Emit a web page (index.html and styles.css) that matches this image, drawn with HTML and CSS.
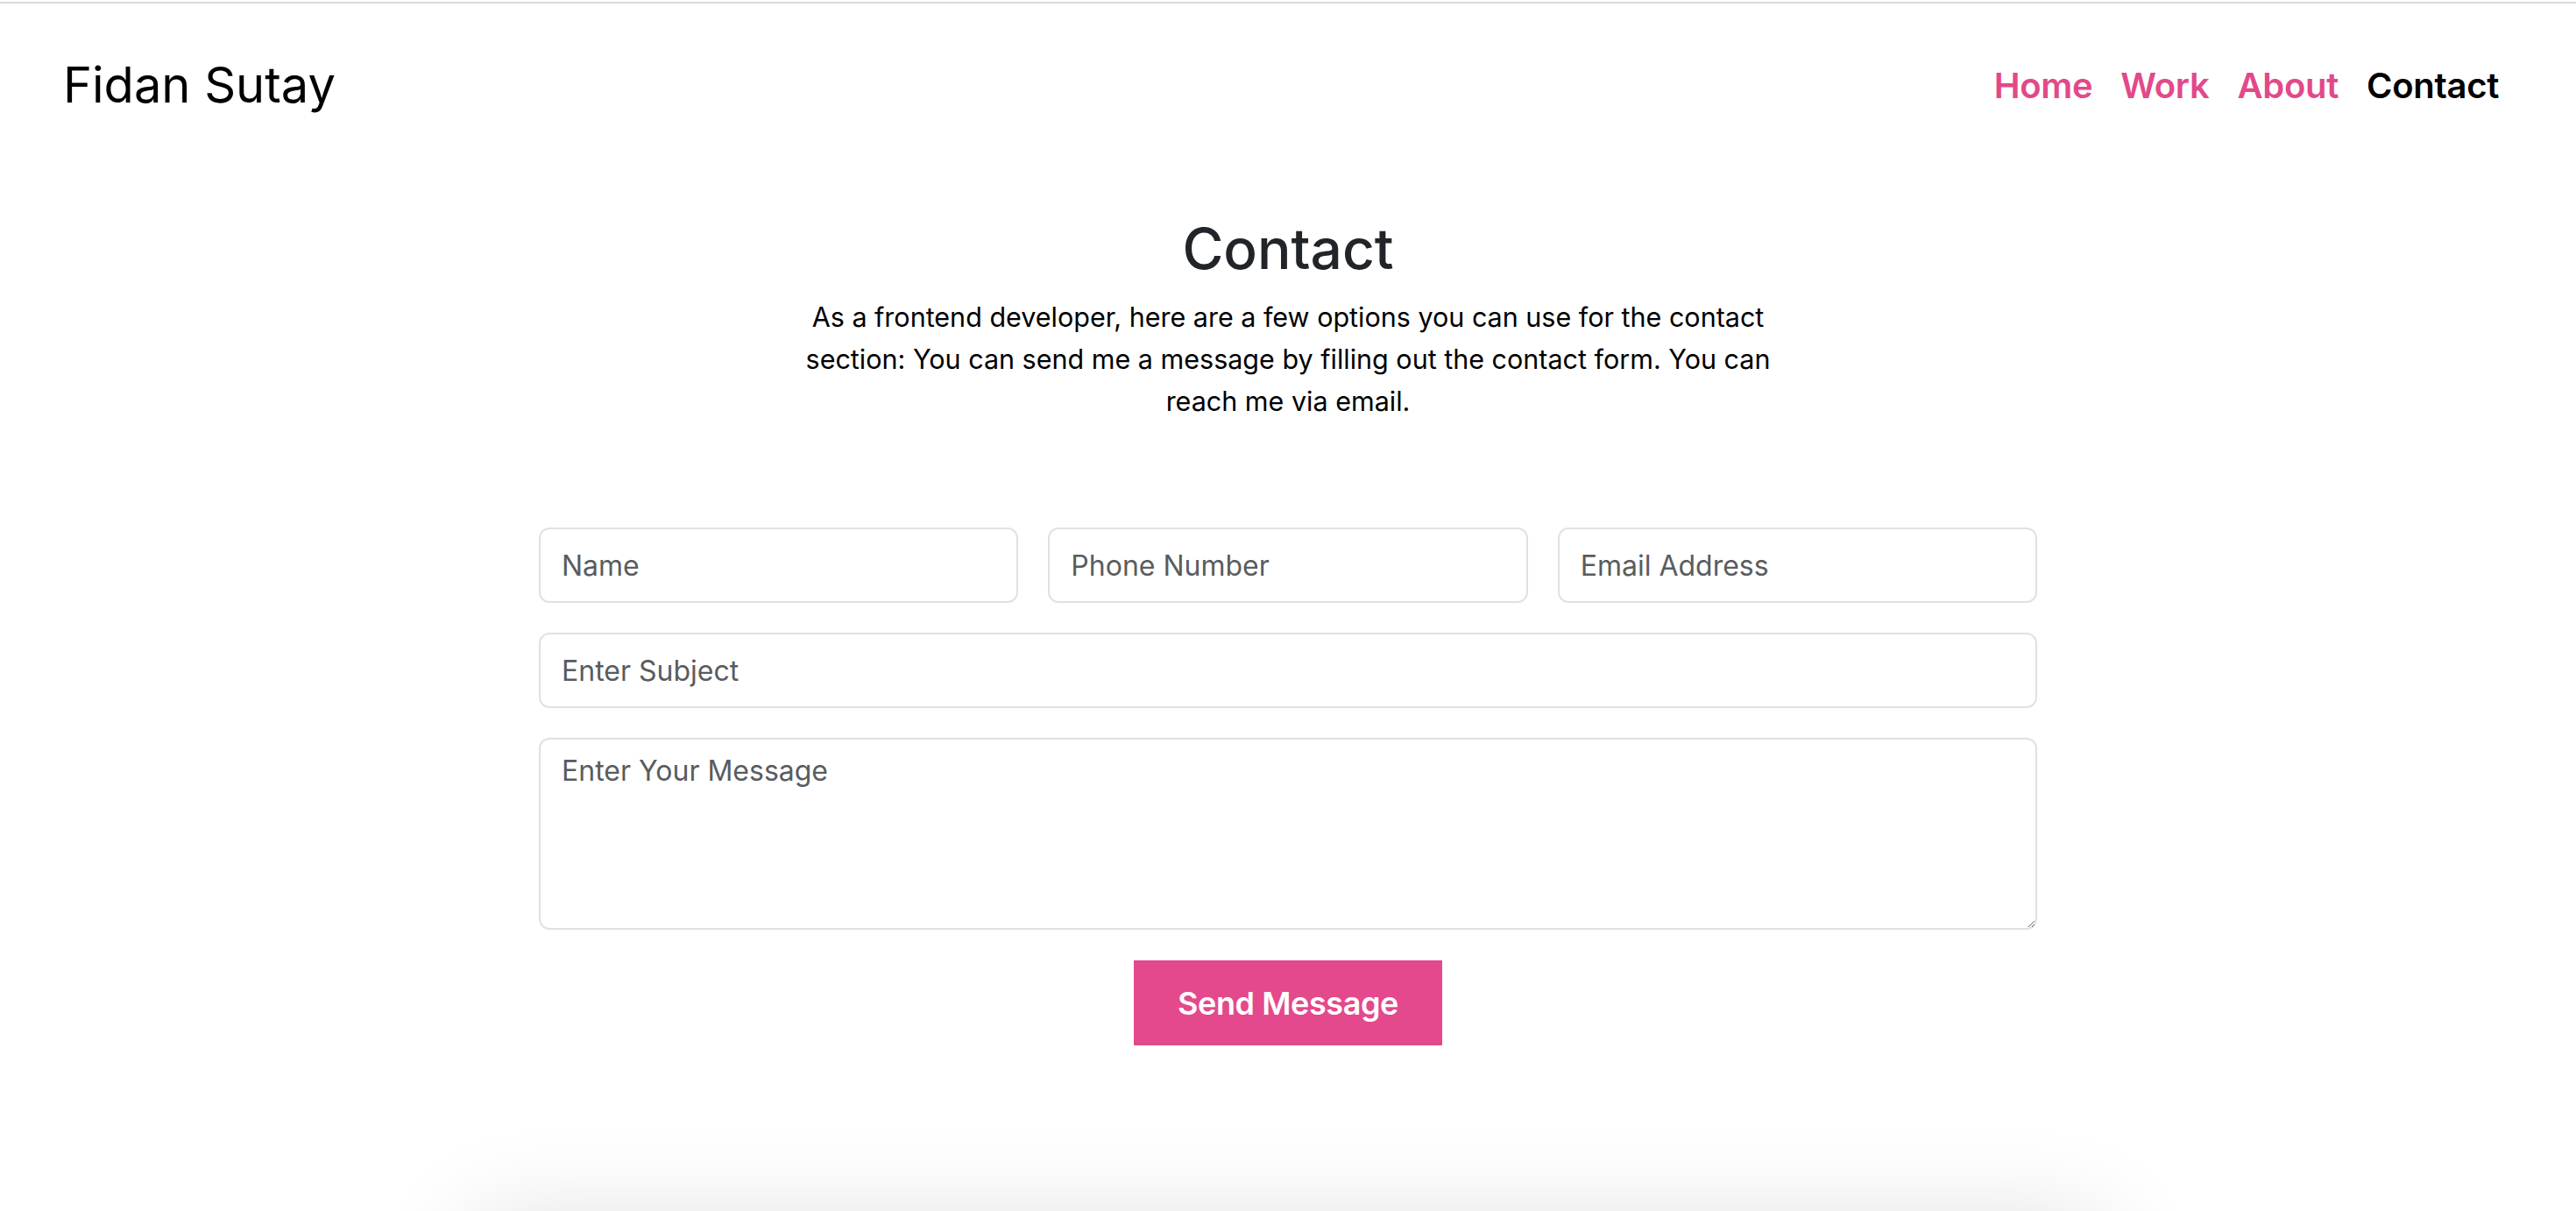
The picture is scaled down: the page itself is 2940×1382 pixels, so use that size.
FILE: index.html
```html
<!DOCTYPE html>
<html lang="en">
<head>
<meta charset="utf-8">
<title>Fidan Sutay - Contact</title>
<link rel="stylesheet" href="styles.css">
</head>
<body>
<div class="topline"></div>
<header class="site-header">
  <a class="brand" href="#">Fidan Sutay</a>
  <nav class="nav">
    <a class="nav-link" href="#">Home</a>
    <a class="nav-link" href="#">Work</a>
    <a class="nav-link" href="#">About</a>
    <a class="nav-link active" href="#">Contact</a>
  </nav>
</header>
<main class="contact">
  <h1 class="contact-title">Contact</h1>
  <p class="contact-lead">As a frontend developer, here are a few options you can use for the contact section: You can send me a message by filling out the contact form. You can reach me via email.</p>
  <form class="contact-form">
    <div class="row-3">
      <input class="field" type="text" placeholder="Name">
      <input class="field" type="text" placeholder="Phone Number">
      <input class="field" type="email" placeholder="Email Address">
    </div>
    <input class="field" type="text" placeholder="Enter Subject">
    <textarea class="field area" placeholder="Enter Your Message"></textarea>
    <div class="actions">
      <button class="send" type="button">Send Message</button>
    </div>
  </form>
</main>
<section class="below-card"></section>
</body>
</html>
```
FILE: styles.css
```css
* { box-sizing: border-box; }
html, body { margin: 0; padding: 0; background: #fff; }
body {
  font-family: Inter, "Noto Sans", sans-serif;
  color: #212529;
  overflow: hidden;
}
.topline {
  height: 2px;
  margin-top: 2px;
  background: #dadada;
}
.site-header {
  height: 186px;
  display: flex;
  align-items: center;
  justify-content: space-between;
  padding: 0 72px;
}
.brand {
  font-size: 56px;
  font-weight: 400;
  color: #000;
  text-decoration: none;
}
.nav { display: flex; }
.nav-link {
  font-size: 40px;
  font-weight: 600;
  letter-spacing: -0.3px;
  color: #e2498a;
  text-decoration: none;
  padding: 0 16px;
}
.nav-link.active { color: #000; }
.contact {
  display: flex;
  flex-direction: column;
  align-items: center;
}
.contact-title {
  margin: 55px 0 0;
  font-size: 64px;
  line-height: 77px;
  font-weight: 500;
  color: #212529;
}
.contact-lead {
  margin: 16px 0 0;
  width: 1150px;
  text-align: center;
  font-size: 30.5px;
  line-height: 48px;
  color: #000;
}
.contact-form {
  margin-top: 120px;
  width: 1710px;
  display: flex;
  flex-direction: column;
  gap: 34px;
}
.row-3 {
  display: grid;
  grid-template-columns: 1fr 1fr 1fr;
  gap: 34px;
}
.field {
  display: block;
  width: 100%;
  height: 86px;
  padding: 0 24px;
  border: 2px solid #dee2e6;
  border-radius: 12px;
  font-family: Inter, "Noto Sans", sans-serif;
  font-size: 32px;
  color: #212529;
  background: #fff;
  outline: none;
}
.field::placeholder { color: #595c5f; opacity: 1; }
.area {
  height: 219px;
  padding: 12px 24px;
  line-height: 48px;
  resize: vertical;
}
.actions {
  display: flex;
  justify-content: center;
  margin-top: 1px;
}
.send {
  width: 352px;
  height: 97px;
  border: none;
  border-radius: 0;
  background: #e3498c;
  color: #fff;
  font-family: Inter, "Noto Sans", sans-serif;
  font-size: 36px;
  font-weight: 600;
  letter-spacing: -0.4px;
}
.below-card {
  width: 1860px;
  height: 400px;
  margin: 205px auto 0;
  background: #fff;
  box-shadow: 0 0 110px rgba(0, 0, 0, 0.14);
}
```
